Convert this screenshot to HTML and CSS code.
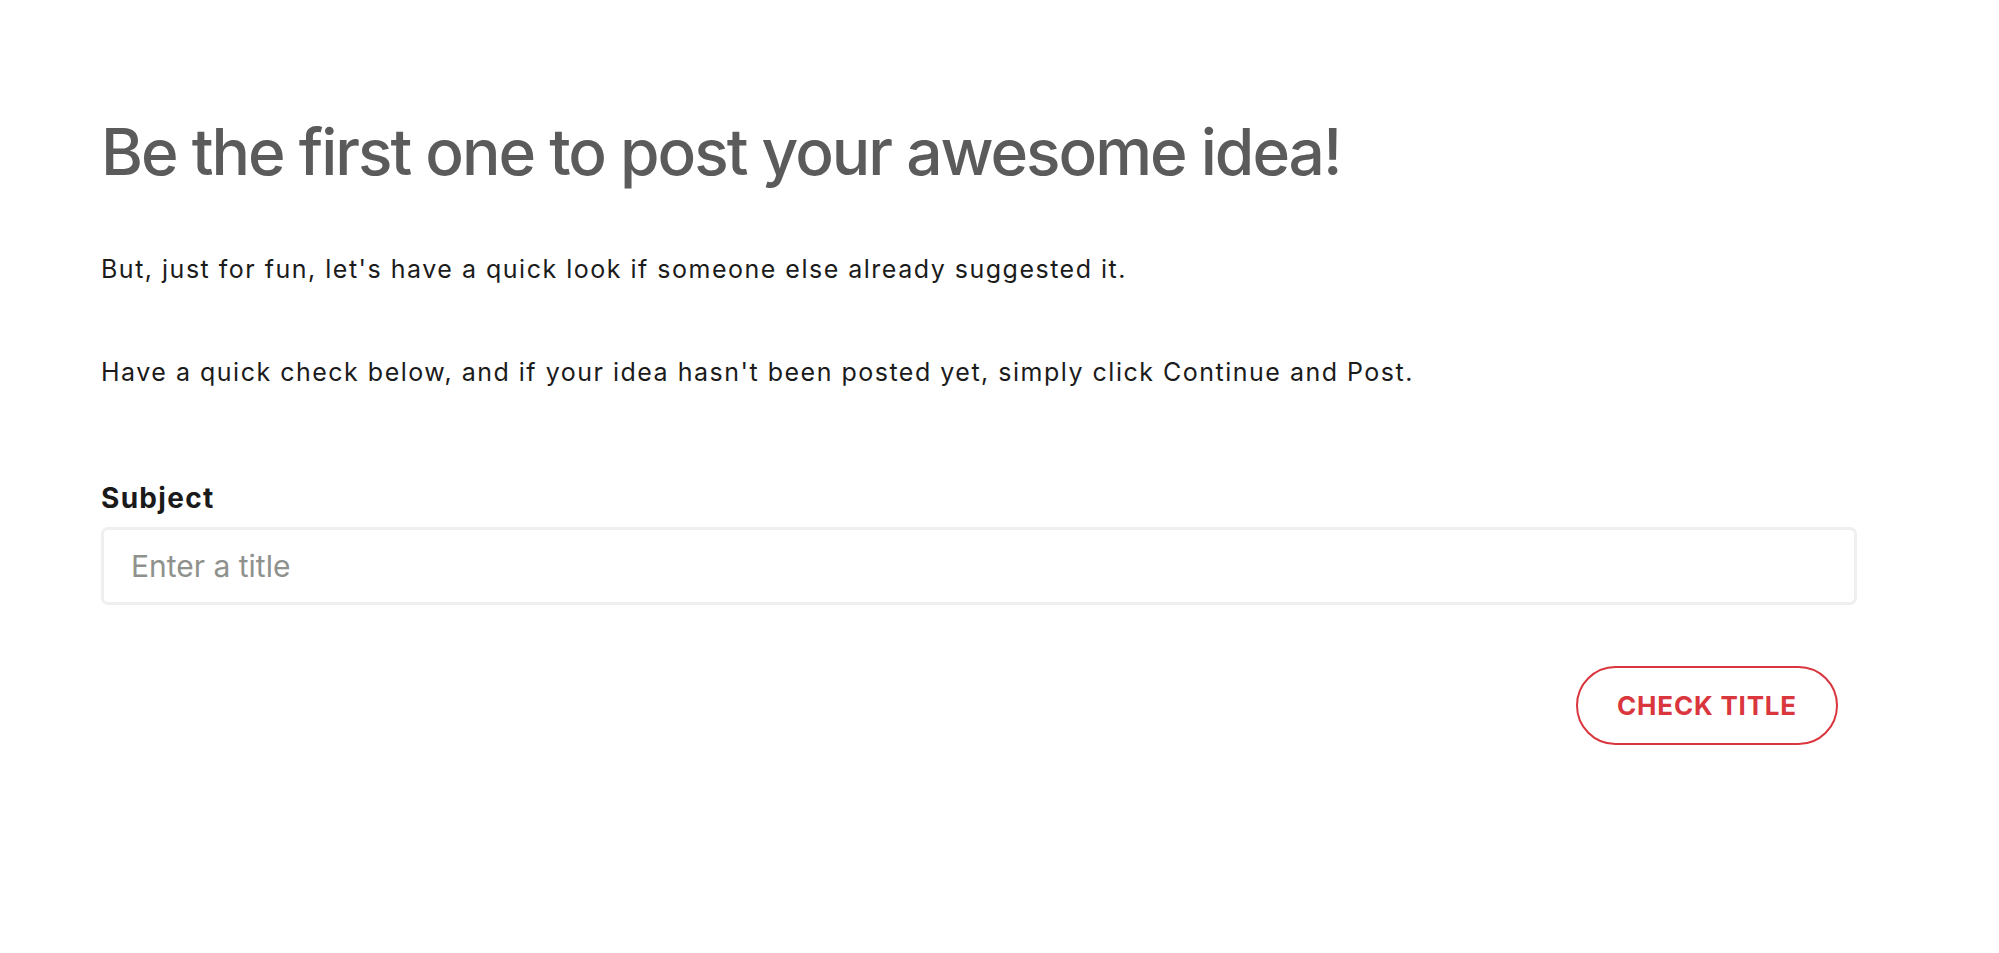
FILE: index.html
```html
<!DOCTYPE html>
<html lang="en">
<head>
<meta charset="utf-8">
<title>Post your idea</title>
<link rel="stylesheet" href="styles.css">
</head>
<body>
<main class="page">
  <h1 class="title">Be the first one to post your awesome idea!</h1>
  <p class="lead">But, just for fun, let's have a quick look if someone else already suggested it.</p>
  <p class="lead lead-second">Have a quick check below, and if your idea hasn't been posted yet, simply click Continue and Post.</p>
  <form class="form">
    <label class="label" for="subject">Subject</label>
    <input class="input" id="subject" type="text" placeholder="Enter a title">
    <div class="actions">
      <button class="btn" type="button">CHECK TITLE</button>
    </div>
  </form>
</main>
</body>
</html>
```

FILE: styles.css
```css
* { box-sizing: border-box; }
html, body { margin: 0; padding: 0; background: #fff; }
body { font-family: Inter, "Liberation Sans", sans-serif; color: #1b1b1b; }

.page {
  padding: 114px 142px 0 101px;
}

.title {
  margin: 0;
  font-size: 64px;
  line-height: 76px;
  font-weight: 500;
  color: #5b5b5b;
  letter-spacing: -2px;
}

.lead {
  margin: 61px 0 0;
  font-size: 25px;
  line-height: 36px;
  font-weight: 400;
  letter-spacing: 1.5px;
}
.lead-second { margin-top: 67px; }

.form {
  display: flex;
  flex-direction: column;
  margin-top: 92px;
}

.label {
  font-size: 28px;
  line-height: 32px;
  font-weight: 700;
  color: #1a1a1a;
  letter-spacing: 1.3px;
}

.input {
  margin-top: 13px;
  height: 78px;
  width: 100%;
  border: 3px solid #efefef;
  border-radius: 7px;
  padding: 0 27px;
  font-family: inherit;
  font-size: 30px;
  color: #1b1b1b;
  outline: none;
}
.input::placeholder { color: #8f918d; }

.actions {
  display: flex;
  justify-content: flex-end;
  margin-top: 61px;
  padding-right: 19px;
}

.btn {
  width: 262px;
  height: 79px;
  border: 2px solid #d9363e;
  border-radius: 40px;
  background: #fff;
  color: #d9363e;
  font-family: inherit;
  font-size: 26px;
  font-weight: 700;
  letter-spacing: 0.8px;
  cursor: pointer;
}
```
